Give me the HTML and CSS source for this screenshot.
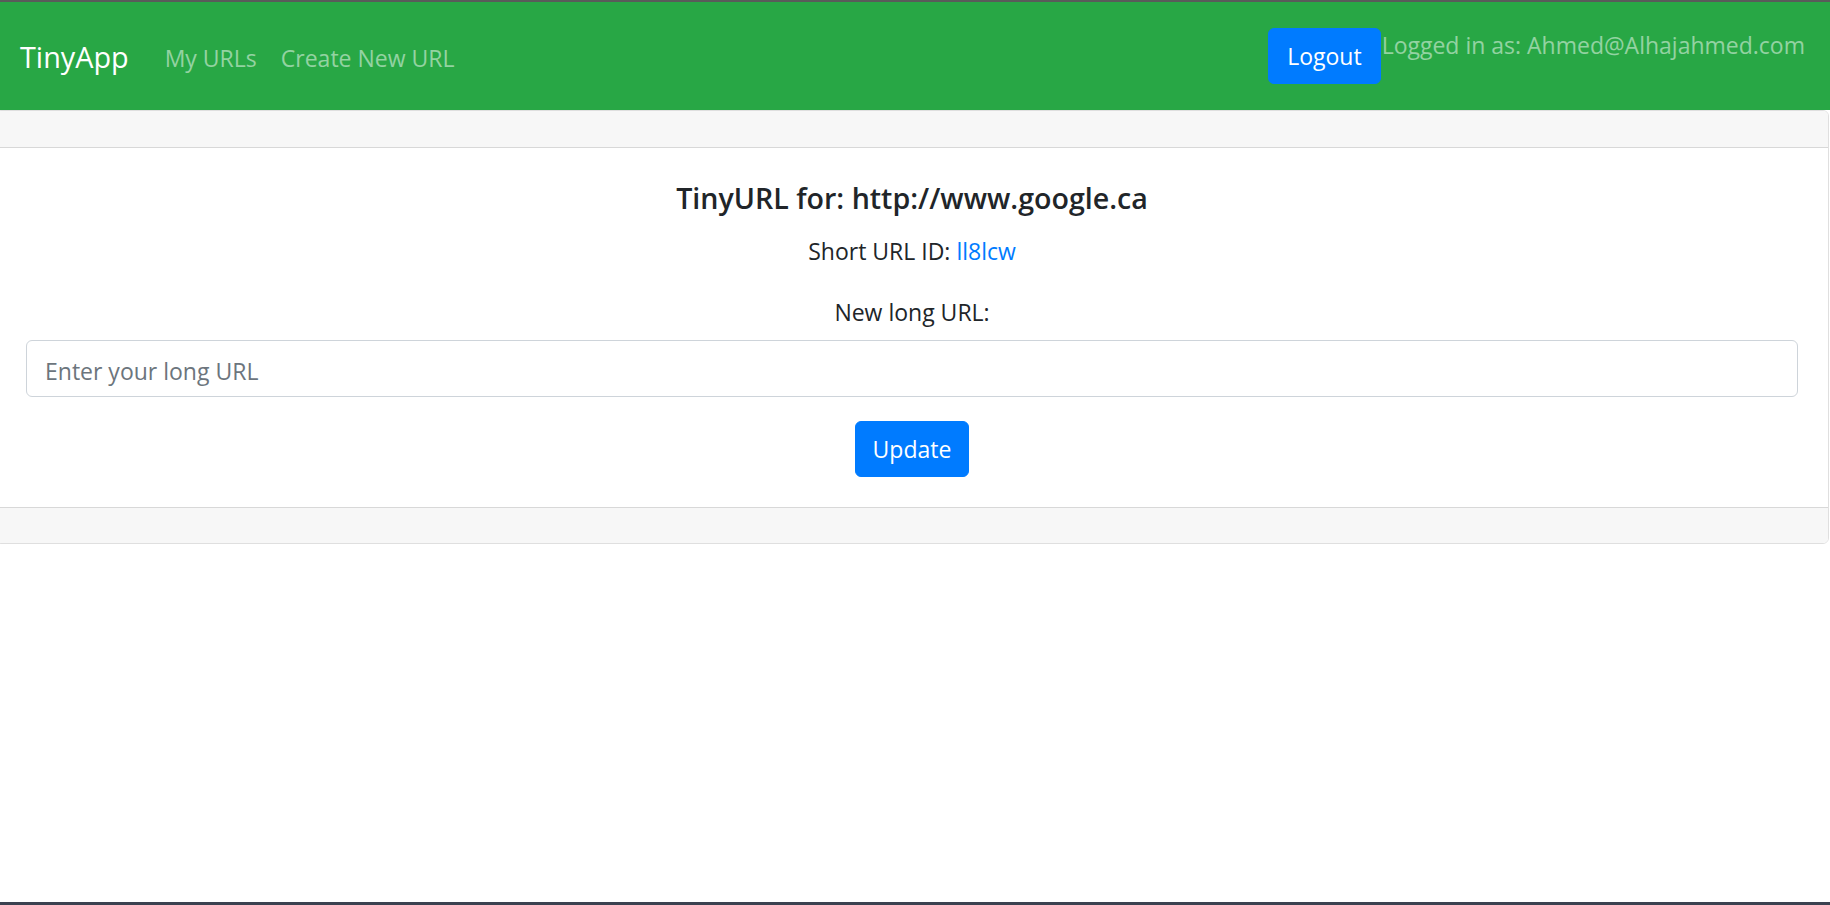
FILE: index.html
```html
<!DOCTYPE html>
<html lang="en">
<head>
<meta charset="utf-8">
<title>TinyApp</title>
<link rel="stylesheet" href="styles.css">
</head>
<body>
<nav class="navbar">
  <a class="brand" href="#">TinyApp</a>
  <ul class="nav">
    <li><a class="nav-link" href="#">My URLs</a></li>
    <li><a class="nav-link" href="#">Create New URL</a></li>
  </ul>
  <div class="user">
    <form class="logout-form"><button type="button" class="btn">Logout</button></form>
    <span class="logged">Logged in as: Ahmed@Alhajahmed.com</span>
  </div>
</nav>
<main class="card">
  <div class="card-header"></div>
  <div class="card-body">
    <h5 class="title">TinyURL for: http://www.google.ca</h5>
    <p class="short">Short URL ID: <a class="link" href="#">ll8lcw</a></p>
    <form class="update-form">
      <label class="label" for="longURL">New long URL:</label>
      <input class="input" id="longURL" type="text" placeholder="Enter your long URL">
      <button type="button" class="btn btn-update">Update</button>
    </form>
  </div>
  <div class="card-footer"></div>
</main>
</body>
</html>
```
FILE: styles.css
```css
* { box-sizing: border-box; }
html, body { margin: 0; padding: 0; }
body {
  font-family: "Open Sans", "Noto Sans", sans-serif;
  font-size: 23px;
  line-height: 36px;
  color: #212529;
  background: #fff;
  min-height: 100vh;
  border-top: 2px solid #5a5a5a;
  border-bottom: 3px solid #3b4150;
  overflow: hidden;
}
.navbar {
  display: flex;
  align-items: flex-start;
  height: 108px;
  padding: 26px 25px 0 20px;
  background: #28a745;
}
.brand {
  font-size: 28.8px;
  line-height: 45px;
  padding-top: 6px;
  color: #fff;
  text-decoration: none;
  margin-right: 24px;
}
.nav {
  display: flex;
  list-style: none;
  margin: 0;
  padding: 0;
}
.nav-link {
  display: block;
  padding: 12px 12px 0;
  color: rgba(255,255,255,.5);
  text-decoration: none;
}
.user {
  margin-left: auto;
  display: flex;
  align-items: flex-start;
}
.logout-form { margin: 0; }
.btn {
  font-family: inherit;
  font-size: 23px;
  line-height: 36px;
  color: #fff;
  background: #007bff;
  border: 1px solid #007bff;
  border-radius: 6px;
  padding: 9px 18px;
  height: 56px;
  cursor: pointer;
}
.logged {
  color: rgba(255,255,255,.5);
  margin-top: -1px;
  margin-left: 1px;
}
.card {
  display: block;
  width: 1834px;
  margin-left: -5px;
  border: 1px solid rgba(0,0,0,.125);
  border-radius: 6px;
  overflow: hidden;
}
.card-header, .card-footer {
  height: 37px;
  background: #f7f7f7;
}
.card-header { border-bottom: 1px solid rgba(0,0,0,.125); }
.card-footer { border-top: 1px solid rgba(0,0,0,.125); height: 36px; }
.card-body {
  padding: 30px;
  text-align: center;
  height: 359px;
}
.title {
  font-size: 28.6px;
  font-weight: 600;
  line-height: 36px;
  margin: 2px 0 0;
}
.short { margin: 17px 0 25px; }
.link { color: #007bff; text-decoration: none; }
.update-form { margin: 0; }
.label { display: block; margin-bottom: 10px; }
.input {
  display: block;
  width: 100%;
  height: 57px;
  padding: 11px 18px 7px;
  font-family: inherit;
  font-size: 23px;
  line-height: 36px;
  color: #495057;
  border: 1px solid #ced4da;
  border-radius: 6px;
  margin-bottom: 24px;
}
.input::placeholder { color: #6c757d; }
.btn-update { display: inline-block; padding: 9px 17px; }
```
